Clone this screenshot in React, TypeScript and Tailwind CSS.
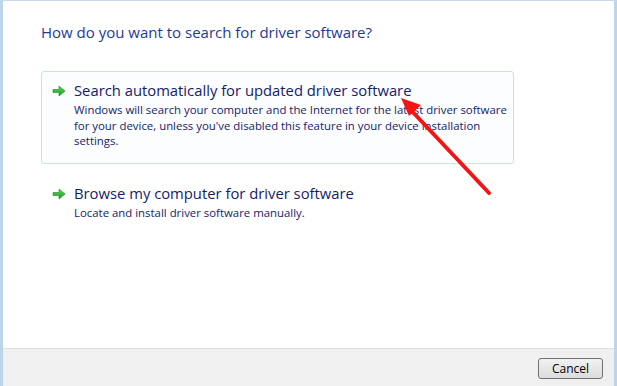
const GreenArrow = () => (
  <svg width="14" height="12" viewBox="0 0 14 12" className="shrink-0">
    <defs>
      <linearGradient id="ga" x1="0" y1="0" x2="0" y2="1">
        <stop offset="0" stopColor="#5fdc5a" />
        <stop offset="1" stopColor="#139a1c" />
      </linearGradient>
    </defs>
    <path d="M1 4.5h6V1l6 5-6 5V7.5H1z" fill="url(#ga)" stroke="#1c8a25" strokeWidth="0.6" strokeLinejoin="round" />
  </svg>
);

const options = [
  {
    title: "Search automatically for updated driver software",
    lines: [
      "Windows will search your computer and the Internet for the latest driver software",
      "for your device, unless you've disabled this feature in your device installation",
      "settings.",
    ],
    selected: true,
  },
  {
    title: "Browse my computer for driver software",
    lines: ["Locate and install driver software manually."],
    selected: false,
  },
];

export default function App() {
  return (
    <div
      className="relative flex h-[386px] w-[617px] flex-col overflow-hidden border-t border-l-[3px] border-r-[3px] border-t-[#c9d9ea] border-l-[#bdd5ec] border-r-[#bdd5ec] bg-white"
      style={{ fontFamily: '"Open Sans", "Noto Sans", sans-serif' }}
    >
      <div className="flex-1 pl-[38px] pt-[21px]">
        <h1 className="text-[15px] leading-[20px] text-[#1e3a96]">
          How do you want to search for driver software?
        </h1>
        <div className="mt-[29px] flex w-[473px] flex-col gap-[10px]">
          {options.map((o) => (
            <div
              key={o.title}
              className={
                o.selected
                  ? "flex gap-[8px] rounded-[3px] border border-[#c4e2ef] bg-[#fbfdfe] pb-[14px] pl-[10px] pt-[8px]"
                  : "flex gap-[8px] rounded-[3px] border border-transparent pb-[14px] pl-[10px] pt-[8px]"
              }
            >
              <div className="pt-[5px]">
                <GreenArrow />
              </div>
              <div className="text-[#151c6a]">
                <div className="whitespace-nowrap text-[14.8px] leading-[20px]">{o.title}</div>
                <div className="mt-[2px] whitespace-nowrap text-[11.4px] leading-[15.5px]">
                  {o.lines.map((l) => (
                    <div key={l}>{l}</div>
                  ))}
                </div>
              </div>
            </div>
          ))}
        </div>
      </div>
      <div className="flex h-[38px] items-start justify-end border-t border-[#dfdfdf] bg-[#f0f0f0] pr-[11px] pt-[9px]">
        <button className="h-[21px] w-[65px] rounded-[3px] border border-[#707070] bg-gradient-to-b from-[#f2f2f2] to-[#dcdcdc] text-[12px] leading-[19px] text-black">
          Cancel
        </button>
      </div>
      <svg
        className="pointer-events-none absolute left-0 top-0"
        width="617"
        height="386"
        viewBox="0 0 617 386"
      >
        <line x1="486" y1="192" x2="405" y2="106" stroke="#f51414" strokeWidth="4" strokeLinecap="round" />
        <path d="M398 97 L418 104 L406 115 Z" fill="#f51414" />
      </svg>
    </div>
  );
}
